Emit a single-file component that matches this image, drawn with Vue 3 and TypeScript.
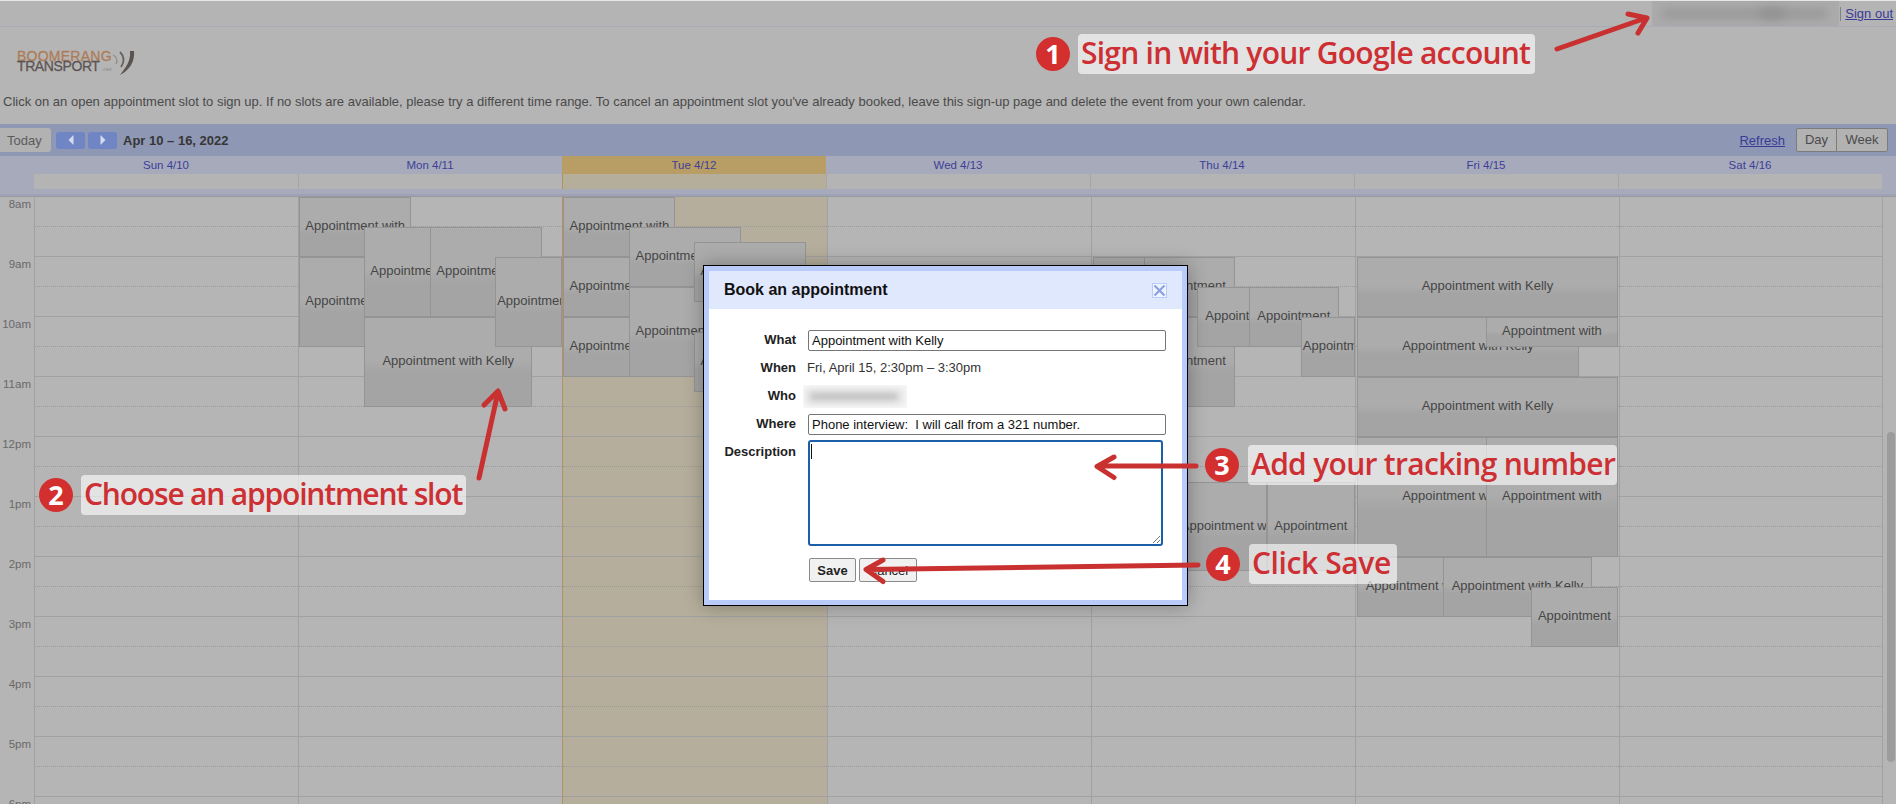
<script setup lang="ts">
interface Ev { day: number; x: number; w: number; y: number; h: number; t: string }
const days = ['Sun 4/10', 'Mon 4/11', 'Tue 4/12', 'Wed 4/13', 'Thu 4/14', 'Fri 4/15', 'Sat 4/16']
const hours = ['8am', '9am', '10am', '11am', '12pm', '1pm', '2pm', '3pm', '4pm', '5pm', '6pm']
const W = 'Appointment with'
const K = 'Appointment with Kelly'
const A = 'Appointment'
const events: Ev[] = [
  { day: 1, x: 0, w: 112, y: 0, h: 60, t: W },
  { day: 1, x: 0, w: 112, y: 60, h: 90, t: W },
  { day: 1, x: 65, w: 112, y: 30, h: 90, t: W },
  { day: 1, x: 65, w: 168, y: 120, h: 90, t: K },
  { day: 1, x: 131, w: 112, y: 30, h: 90, t: W },
  { day: 1, x: 196, w: 67, y: 60, h: 90, t: W },
  { day: 2, x: 0, w: 112, y: 0, h: 60, t: W },
  { day: 2, x: 0, w: 112, y: 60, h: 60, t: W },
  { day: 2, x: 0, w: 112, y: 120, h: 60, t: W },
  { day: 2, x: 66, w: 112, y: 30, h: 60, t: W },
  { day: 2, x: 66, w: 112, y: 90, h: 90, t: W },
  { day: 2, x: 131, w: 112, y: 45, h: 60, t: W },
  { day: 2, x: 131, w: 112, y: 135, h: 60, t: W },
  { day: 4, x: 1, w: 90, y: 60, h: 60, t: A },
  { day: 4, x: 52, w: 91, y: 60, h: 60, t: A },
  { day: 4, x: 52, w: 91, y: 120, h: 90, t: A },
  { day: 4, x: 105, w: 90, y: 90, h: 60, t: A },
  { day: 4, x: 157, w: 90, y: 90, h: 60, t: A },
  { day: 4, x: 209, w: 54, y: 120, h: 60, t: A },
  { day: 4, x: 87, w: 88, y: 285, h: 89, t: K },
  { day: 4, x: 175, w: 88, y: 285, h: 89, t: A },
  { day: 5, x: 1, w: 261, y: 60, h: 60, t: K },
  { day: 5, x: 1, w: 222, y: 120, h: 60, t: K },
  { day: 5, x: 130, w: 132, y: 120, h: 30, t: W },
  { day: 5, x: 1, w: 261, y: 180, h: 60, t: K },
  { day: 5, x: 1, w: 222, y: 240, h: 120, t: K },
  { day: 5, x: 130, w: 132, y: 240, h: 120, t: W },
  { day: 5, x: 1, w: 149, y: 360, h: 60, t: K },
  { day: 5, x: 87, w: 149, y: 360, h: 60, t: K },
  { day: 5, x: 175, w: 87, y: 390, h: 60, t: A },
]
function evStyle(e: Ev) {
  return { left: e.x + 'px', width: e.w + 'px', top: e.y + 'px', height: e.h + 'px' }
}
function dayEvents(i: number) {
  return events.filter((e) => e.day === i)
}
</script>

<template>
  <div class="page">
    <header class="topbar">
      <div class="email"><span class="email-blur"></span><span class="email-at"></span></div>
      <span class="pipe"></span>
      <a class="link signout">Sign out</a>
    </header>

    <div class="logo">
      <div class="logo-words">
        <div class="logo-a">BOOMERANG</div>
        <div class="logo-b">TRANSPORT<span>.net</span></div>
      </div>
      <svg class="logo-mark" width="24" height="26" viewBox="0 0 24 26">
        <path d="M1 5c4 2 5 6 3 9" fill="none" stroke="#8d8a88" stroke-width="1.2" />
        <path d="M8 2c4 4 5 9 1 15" fill="none" stroke="#69635f" stroke-width="1.8" />
        <path d="M18 1h4c1 10-4 19-14 24 5-7 11-13 10-24z" fill="#5a5350" />
      </svg>
    </div>

    <p class="intro">Click on an open appointment slot to sign up. If no slots are available, please try a different time range. To cancel an appointment slot you've already booked, leave this sign-up page and delete the event from your own calendar.</p>

    <div class="toolbar">
      <button class="today">Today</button>
      <button class="nav">
        <svg width="8" height="10" viewBox="0 0 8 10"><path d="M6.500 0 1.500 5l5 5z" fill="#d5dcf0" /></svg>
      </button>
      <button class="nav">
        <svg width="8" height="10" viewBox="0 0 8 10"><path d="M1.500 0l5 5-5 5z" fill="#d5dcf0" /></svg>
      </button>
      <strong class="range">Apr 10 – 16, 2022</strong>
      <span class="spacer"></span>
      <a class="link refresh">Refresh</a>
      <div class="seg">
        <span class="seg-day">Day</span>
        <span class="seg-week">Week</span>
      </div>
    </div>

    <div class="dayhead">
      <div class="gut"></div>
      <div v-for="(d, i) in days" :key="d" class="dh" :class="{ now: i === 2 }">
        <div class="dh-name">{{ d }}</div>
        <div class="dh-all"></div>
      </div>
    </div>

    <div class="grid">
      <div class="gutter">
        <div v-for="h in hours" :key="h" class="tlabel">{{ h }}</div>
      </div>
      <div v-for="(d, i) in days" :key="d" class="col" :class="{ now: i === 2 }">
        <div v-for="h in hours" :key="h" class="hour"><div class="half"></div></div>
        <div v-for="(e, n) in dayEvents(i)" :key="n" class="ev" :style="evStyle(e)">
          <div class="ev-t">{{ e.t }}</div>
        </div>
      </div>
    </div>
    <div class="thumb"></div>

    <section class="modal">
      <div class="m-title">
        <h2>Book an appointment</h2>
        <span class="m-close">
          <svg width="13" height="13" viewBox="0 0 13 13"><path d="M1.500 1.500l10 10M11.500 1.500l-10 10" stroke="#88a1e4" stroke-width="2.200" /></svg>
        </span>
      </div>
      <div class="m-form">
        <label>What</label>
        <div class="field">Appointment with Kelly</div>
        <label>When</label>
        <div class="val">Fri, April 15, 2:30pm – 3:30pm</div>
        <label>Who</label>
        <div class="who"><span></span></div>
        <label>Where</label>
        <div class="field">Phone interview:&nbsp; I will call from a 321 number.</div>
        <label>Description</label>
        <div class="area">
          <i class="caret"></i>
          <svg class="grip" width="10" height="10" viewBox="0 0 10 10"><path d="M9 2 2 9M9 6 6 9" stroke="#777" stroke-width="1" /></svg>
        </div>
        <div></div>
        <div class="btns">
          <button class="btn save">Save</button>
          <button class="btn cancel">Cancel</button>
        </div>
      </div>
    </section>

    <svg class="arrows" width="1896" height="804" viewBox="0 0 1896 804">
      <g fill="none" stroke="#c93131" stroke-width="5" stroke-linecap="round" stroke-linejoin="round">
        <path d="M1557 49 1646 18M1628 14l19 4-9 15" />
        <path d="M479 478 498 392M484 405l14-14 7 18" />
        <path d="M1196 466H1098M1114 457l-17 9.500 17 11" />
        <path d="M1198 565 867 569.500M883 560l-17 9.500 17 12" />
      </g>
    </svg>

    <div class="note n1"><b>1</b><span>Sign in with your Google account</span></div>
    <div class="note n2"><b>2</b><span>Choose an appointment slot</span></div>
    <div class="note n3"><b>3</b><span>Add your tracking number</span></div>
    <div class="note n4"><b>4</b><span>Click Save</span></div>
  </div>
</template>

<style scoped>
.page {
  position: relative;
  width: 1896px;
  height: 804px;
  overflow: hidden;
  background: #b5b5b5;
  font-family: "Liberation Sans", Arial, sans-serif;
  font-size: 13px;
  color: #454545;
}
.link { color: #3a3a98; text-decoration: underline; }
.topbar {
  display: flex;
  justify-content: flex-end;
  align-items: center;
  height: 25px;
  padding-right: 3px;
  border-top: 1px solid #e6e6e6;
  border-bottom: 1px solid #a8abb8;
  background: #b4b4b4;
  font-size: 13px;
}
.email {
  position: relative;
  width: 187px;
  height: 25px;
  background: #ababab;
  overflow: hidden;
}
.email-blur {
  position: absolute;
  left: 10px;
  top: 8px;
  width: 165px;
  height: 9px;
  background: #989898;
  filter: blur(4px);
}
.email-at {
  position: absolute;
  left: 108px;
  top: 7px;
  width: 24px;
  height: 11px;
  background: #929292;
  filter: blur(5px);
}
.pipe { width: 1px; height: 14px; background: #808090; margin: 0 4px 0 1px; }
.logo {
  display: flex;
  align-items: flex-start;
  height: 65px;
  padding: 24px 0 0 17px;
  box-sizing: border-box;
}
.logo-words {
  width: 95px;
  line-height: 10px;
  font-size: 14px;
  -webkit-text-stroke: .3px currentColor;
  white-space: nowrap;
}
.logo-a { color: #ad7c58; letter-spacing: .25px; }
.logo-b { color: #5d5553; letter-spacing: -.4px; }
.logo-b span { font-size: 6px; letter-spacing: 0; margin-left: 2px; color: #8d8986; -webkit-text-stroke: 0; }
.logo-mark { margin: -1px 0 0 0; }
.intro {
  margin: 0;
  padding-left: 3px;
  height: 32px;
  line-height: 20px;
  font-size: 13px;
  color: #4a4a4a;
}
.toolbar {
  display: flex;
  align-items: center;
  height: 32px;
  background: #8e98b4;
}
.today {
  width: 51px;
  height: 24px;
  padding: 0 0 0 7px;
  text-align: left;
  border: 0;
  border-radius: 0 3px 3px 0;
  background: #b2b2b2;
  color: #5b5b5b;
  font: 13px "Liberation Sans", Arial, sans-serif;
  margin-right: 5px;
}
.nav {
  width: 29px;
  height: 17px;
  padding: 0;
  margin-right: 3px;
  border: 0;
  border-radius: 3px;
  background: #6f85c4;
  display: flex;
  align-items: center;
  justify-content: center;
}
.range { margin-left: 3px; font-size: 13px; color: #363636; }
.spacer { flex: 1; }
.refresh { margin-right: 11px; font-size: 13px; }
.seg {
  display: flex;
  height: 24px;
  margin-right: 8px;
  border: 1px solid #7c7c7c;
  border-radius: 2px;
  box-sizing: border-box;
  line-height: 22px;
  background: #b2b2b2;
  color: #4a4a4a;
}
.seg-day { width: 39px; text-align: center; border-right: 1px solid #7c7c7c; }
.seg-week { width: 50px; text-align: center; }
.dayhead {
  display: grid;
  grid-template-columns: 34px repeat(7, 264px);
  height: 40px;
  box-sizing: border-box;
  background: #a6aaba;
  border-bottom: 2px solid #9da2b8;
}
.dh-name {
  height: 18px;
  line-height: 18px;
  text-align: center;
  font-size: 11.500px;
  color: #3e3e9a;
}
.dh-all {
  height: 15px;
  background: #b4b4b4;
  border-left: 1px solid #a6a6a6;
  box-sizing: border-box;
}
.dh:nth-child(2) .dh-all { border-left: 0; }
.dh.now { background: linear-gradient(#b5ae9a 33px, transparent 33px); }
.dh.now .dh-name { background: #b89e64; }
.dh.now .dh-all { background: #b5ae9a; border-left-color: #b3925c; }
.grid {
  display: grid;
  grid-template-columns: 34px repeat(7, 264.2px);
  height: 608px;
  overflow: hidden;
  box-sizing: border-box;
  border-top: 1px solid #9a9a9a;
}
.tlabel {
  height: 60px;
  box-sizing: border-box;
  padding-right: 3px;
  text-align: right;
  font-size: 11.500px;
  line-height: 14px;
  color: #696969;
}
.col {
  position: relative;
  border-left: 1px solid #a1a1a1;
  box-sizing: border-box;
}
.col:last-child { border-right: 1px solid #a1a1a1; }
.col.now { background: #b5ae9c; border-left-color: #b3925c; }
.hour {
  height: 60px;
  box-sizing: border-box;
  border-bottom: 1px solid #a1a1a1;
}
.half { height: 29.500px; box-sizing: border-box; border-bottom: 1px dotted #999; }
.ev {
  position: absolute;
  box-sizing: border-box;
  display: flex;
  align-items: center;
  overflow: hidden;
  padding-bottom: 3px;
  border: 1px solid #949494;
  background: linear-gradient(#acacac 0, #acacac 48%, #a4a4a4 62%, #a4a4a4 100%);
  color: #454545;
}
.ev-t {
  width: 100%;
  padding: 0 1px;
  box-sizing: border-box;
  text-align: center;
  white-space: nowrap;
  font-size: 13px;
}
.thumb {
  position: absolute;
  right: 1px;
  top: 432px;
  width: 8px;
  height: 330px;
  border-radius: 4px;
  background: #9c9c9c;
}
.modal {
  position: absolute;
  left: 703px;
  top: 265px;
  width: 485px;
  height: 341px;
  box-sizing: border-box;
  border: 1px solid #000;
  background: #fff;
  box-shadow: 0 0 18px rgba(0, 0, 0, .3), inset 0 0 0 5px #b9cbfb;
  padding: 5px;
  color: #222;
}
.m-title {
  display: flex;
  align-items: center;
  justify-content: space-between;
  height: 38px;
  padding: 0 15px;
  background: #e0e8fd;
}
.m-title h2 { margin: 0; font-size: 16px; font-weight: bold; color: #111; }
.m-close {
  width: 15px;
  height: 15px;
  box-sizing: border-box;
  display: flex;
  align-items: center;
  justify-content: center;
  border: 1px solid #b9cbfb;
  background: #f0f4ff;
}
.m-form {
  display: grid;
  grid-template-columns: 87px 358px;
  column-gap: 12px;
  padding-top: 21px;
  grid-auto-rows: min-content;
}
.m-form label {
  text-align: right;
  font-weight: bold;
  font-size: 13px;
  line-height: 20px;
  height: 28px;
  color: #222;
}
.field {
  height: 21px;
  line-height: 19px;
  box-sizing: border-box;
  padding-left: 3px;
  border: 1px solid #767676;
  border-radius: 2px;
  font-size: 13px;
  color: #111;
  margin-bottom: 7px;
}
.val { line-height: 20px; font-size: 13px; height: 28px; margin-left: -1px; color: #333; }
.who { height: 28px; margin-left: -5px; position: relative; }
.who span {
  display: block;
  width: 104px;
  height: 23px;
  margin-top: -1px;
  background: #ececec;
  box-shadow: inset 0 0 6px #fff;
  position: relative;
}
.who span::after {
  content: "";
  position: absolute;
  left: 7px;
  top: 8px;
  width: 88px;
  height: 7px;
  background: #bcbcbc;
  filter: blur(3px);
}
.area {
  position: relative;
  width: 355px;
  height: 106px;
  box-sizing: border-box;
  border: 2px solid #1a5fa8;
  border-radius: 3px;
  margin-top: -2px;
}
.caret { position: absolute; left: 1px; top: 2px; width: 1px; height: 15px; background: #111; }
.grip { position: absolute; right: 0; bottom: 0; }
.btns { display: flex; gap: 3px; margin-top: 12px; margin-left: 1px; }
.btn {
  height: 24px;
  padding: 0;
  border: 1px solid #8a8a8a;
  border-radius: 2px;
  background: #f1f1f1;
  font: 13px "Liberation Sans", Arial, sans-serif;
  color: #222;
}
.save { width: 47px; font-weight: bold; }
.cancel { width: 58px; }
.arrows { position: absolute; left: 0; top: 0; pointer-events: none; }
.note { position: absolute; display: flex; align-items: center; height: 40px; gap: 5px; }
.note b {
  flex: none;
  width: 34px;
  height: 34px;
  border-radius: 50%;
  background: #d32f2f;
  color: #fff;
  text-align: center;
  font: bold 27px/34px "Open Sans", sans-serif;
}
.note span {
  height: 40px;
  box-sizing: border-box;
  padding: 0 3px;
  border-radius: 4px;
  background: rgba(255, 255, 255, .62);
  color: #cd2f33;
  font-family: "Open Sans", sans-serif;
  font-weight: 600;
  font-size: 30px;
  line-height: 37px;
  white-space: nowrap;
}
.n1 { left: 1036px; top: 34px; gap: 8px; }
.n1 span { width: 457px; letter-spacing: -.75px; }
.n2 { left: 39px; top: 475px; gap: 8px; }
.n2 span { width: 385px; letter-spacing: -1.180px; }
.n3 { left: 1205px; top: 445px; gap: 9px; }
.n3 span { width: 369px; letter-spacing: -.7px; }
.n4 { left: 1206px; top: 544px; gap: 9px; }
.n4 span { width: 148px; letter-spacing: -.4px; }
</style>
<style>
html, body { margin: 0; background: #b5b5b5; }
</style>
